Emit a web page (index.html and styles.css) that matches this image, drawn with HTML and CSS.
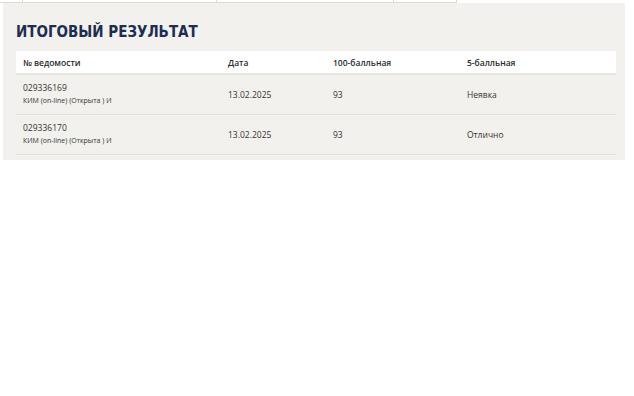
FILE: index.html
```html
<!DOCTYPE html>
<html lang="ru">
<head>
<meta charset="utf-8">
<link rel="stylesheet" href="styles.css">
</head>
<body>
<div class="topstrip">
  <div class="tcell c1"></div>
  <div class="tcell c2"></div>
  <div class="tcell c3"></div>
  <div class="tcell c4"></div>
</div>
<section class="panel">
  <h2 class="title">ИТОГОВЫЙ РЕЗУЛЬТАТ</h2>
  <table class="results">
    <thead>
      <tr>
        <th class="col1">№ ведомости</th>
        <th class="col2">Дата</th>
        <th class="col3">100-балльная</th>
        <th class="col4">5-балльная</th>
      </tr>
    </thead>
    <tbody>
      <tr>
        <td><div class="num">029336169</div><div class="sub">КИМ (on-line) (Открыта ) И</div></td>
        <td>13.02.2025</td>
        <td>93</td>
        <td>Неявка</td>
      </tr>
      <tr>
        <td><div class="num">029336170</div><div class="sub">КИМ (on-line) (Открыта ) И</div></td>
        <td>13.02.2025</td>
        <td>93</td>
        <td>Отлично</td>
      </tr>
    </tbody>
  </table>
</section>
</body>
</html>
```

FILE: styles.css
```css
html, body {
  margin: 0;
  padding: 0;
  background: #ffffff;
}

body {
  font-family: "Open Sans", "Noto Sans", sans-serif;
  color: #333333;
}

.topstrip {
  display: flex;
  width: 457px;
  height: 2px;
  border-bottom: 1px solid #dcdad7;
}

.tcell {
  height: 2px;
}

.c1 { width: 22px; }
.c2 { width: 193px; border-left: 1px solid #dcdad7; }
.c3 { width: 177px; border-left: 1px solid #dcdad7; }
.c4 { width: 62px; border-left: 1px solid #dcdad7; border-right: 1px solid #dcdad7; }

.panel {
  margin-left: 3px;
  width: 622px;
  box-sizing: border-box;
  background: #f2f1ed;
  padding: 19px 9px 5px 13px;
}

.title {
  margin: 0 0 9px 0;
  font-family: "DejaVu Sans", sans-serif;
  font-stretch: condensed;
  font-weight: bold;
  font-size: 15px;
  line-height: 20px;
  color: #1c2e52;
}

.results {
  width: 600px;
  border-collapse: collapse;
  table-layout: fixed;
}

.results th,
.results td {
  box-sizing: border-box;
}

.results th {
  background: #ffffff;
  text-align: left;
  font-weight: 600;
  font-size: 8.5px;
  height: 23px;
  padding: 0 7px;
  border-bottom: 2px solid #e6e5e1;
  color: #2a2a2a;
}

.col1 { width: 205px; }
.col2 { width: 105px; }
.col3 { width: 134px; }
.col4 { width: 156px; }

.results td {
  font-size: 8.5px;
  height: 40px;
  padding: 0 7px;
  border-bottom: 1px solid #e2e1dc;
  vertical-align: middle;
}

.num {
  font-size: 8.5px;
  line-height: 12px;
}

.sub {
  font-size: 7px;
  line-height: 12px;
  margin-top: 1px;
}
```
